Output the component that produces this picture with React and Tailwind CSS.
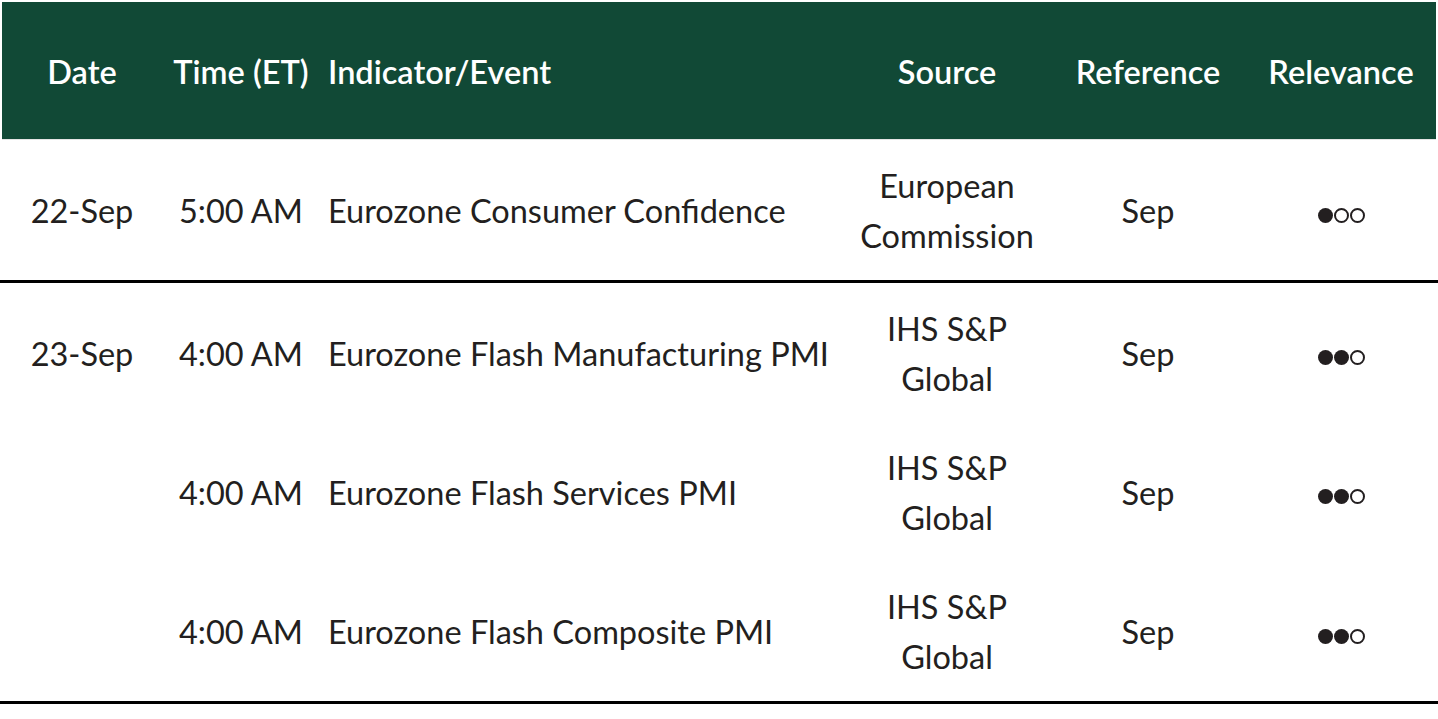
import React from "react";

const rows = [
  { date: "22-Sep", time: "5:00 AM", ind: "Eurozone Consumer Confidence", src: ["European", "Commission"], ref: "Sep", rel: 1, line: true },
  { date: "23-Sep", time: "4:00 AM", ind: "Eurozone Flash Manufacturing PMI", src: ["IHS S&P", "Global"], ref: "Sep", rel: 2 },
  { date: "", time: "4:00 AM", ind: "Eurozone Flash Services PMI", src: ["IHS S&P", "Global"], ref: "Sep", rel: 2 },
  { date: "", time: "4:00 AM", ind: "Eurozone Flash Composite PMI", src: ["IHS S&P", "Global"], ref: "Sep", rel: 2 },
];

const grid = "grid grid-cols-[160px_158px_538px_178px_224px_162px_14px] items-center";

function Dots({ n }) {
  return (
    <div className="flex items-center justify-center gap-[1px] pt-[8px]">
      {[0, 1, 2].map((i) =>
        i < n ? (
          <span key={i} className="w-[15px] h-[15px] rounded-full bg-[#231f20]" />
        ) : (
          <span key={i} className="w-[15px] h-[15px] rounded-full border-[2.5px] border-[#231f20]" />
        )
      )}
    </div>
  );
}

export default function App() {
  return (
    <div className="w-[1438px] h-[719px] bg-white pt-[2px] text-[#231f20]" style={{ fontFamily: "Lato, 'Open Sans', sans-serif" }}>
      <div className={`${grid} mx-[2px] h-[138px] pt-[4px] bg-[#114936] text-white text-[32.5px] font-semibold border-b border-[#e5e5e5]`}>
        <div className="text-center">Date</div>
        <div className="text-center whitespace-nowrap">Time (ET)</div>
        <div className="pl-2">Indicator/Event</div>
        <div className="text-center">Source</div>
        <div className="text-center">Reference</div>
        <div className="text-center">Relevance</div>
        <div />
      </div>
      {rows.map((r, idx) => (
        <div key={idx} className={r.line ? "border-b-[3px] border-black" : ""}>
          <div className={`${grid} mx-[2px] pt-[2px] ${r.line ? "h-[140px]" : "h-[139.3px]"} text-[32.5px] leading-[50px]`}>
            <div className="text-center">{r.date}</div>
            <div className="text-center whitespace-nowrap">{r.time}</div>
            <div className="pl-2 whitespace-nowrap">{r.ind}</div>
            <div className="text-center whitespace-nowrap">
              {r.src.map((s) => (
                <div key={s}>{s}</div>
              ))}
            </div>
            <div className="text-center">{r.ref}</div>
            <Dots n={r.rel} />
            <div />
          </div>
        </div>
      ))}
      <div className="border-t-[3px] border-black" />
    </div>
  );
}
